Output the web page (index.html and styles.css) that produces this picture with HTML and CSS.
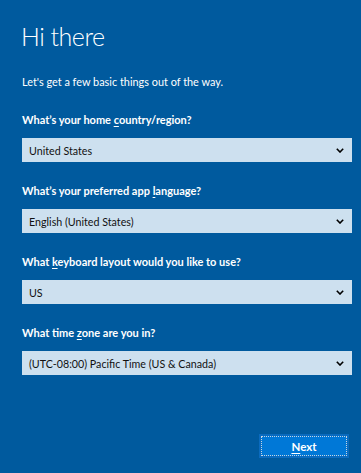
FILE: index.html
```html
<!DOCTYPE html>
<html lang="en">
<head>
<meta charset="utf-8">
<title>Hi there</title>
<link rel="stylesheet" href="styles.css">
</head>
<body>
<div class="page">
  <h1 class="title">Hi there</h1>
  <p class="intro">Let's get a few basic things out of the way.</p>

  <div class="field">
    <div class="label">What’s your home <u>c</u>ountry/region?</div>
    <div class="select"><span>United States</span><svg class="chev" viewBox="0 0 8 5" width="8" height="5"><path d="M0.8 0.8 L4 4 L7.2 0.8" fill="none" stroke="#000" stroke-width="1.6"/></svg></div>
  </div>

  <div class="field">
    <div class="label">What’s your preferred app <u>l</u>anguage?</div>
    <div class="select"><span>English (United States)</span><svg class="chev" viewBox="0 0 8 5" width="8" height="5"><path d="M0.8 0.8 L4 4 L7.2 0.8" fill="none" stroke="#000" stroke-width="1.6"/></svg></div>
  </div>

  <div class="field">
    <div class="label">What <u>k</u>eyboard layout would you like to use?</div>
    <div class="select"><span>US</span><svg class="chev" viewBox="0 0 8 5" width="8" height="5"><path d="M0.8 0.8 L4 4 L7.2 0.8" fill="none" stroke="#000" stroke-width="1.6"/></svg></div>
  </div>

  <div class="field">
    <div class="label">What time <u>z</u>one are you in?</div>
    <div class="select"><span>(UTC-08:00) Pacific Time (US &amp; Canada)</span><svg class="chev" viewBox="0 0 8 5" width="8" height="5"><path d="M0.8 0.8 L4 4 L7.2 0.8" fill="none" stroke="#000" stroke-width="1.6"/></svg></div>
  </div>

  <div class="footer">
    <button class="next"><span class="focus"><u>N</u>ext</span></button>
  </div>
</div>
</body>
</html>
```
FILE: styles.css
```css
html, body {
  margin: 0;
  padding: 0;
  background: #005a9e;
}
body {
  font-family: "Lato", "Open Sans", sans-serif;
  color: #ffffff;
}
.page {
  width: 361px;
  height: 473px;
  box-sizing: border-box;
  padding: 18px 9px 0 22px;
  display: flex;
  flex-direction: column;
}
.title {
  margin: 0 0 0 -1px;
  font-size: 25px;
  font-weight: 300;
  line-height: 37px;
  letter-spacing: -0.5px;
}
.intro {
  margin: 20px 0 0 0;
  font-size: 10.9px;
  line-height: 14px;
}
.field {
  margin-top: 24px;
}
.field + .field {
  margin-top: 22px;
}
.label {
  font-size: 11px;
  font-weight: 700;
  line-height: 14px;
}
.label u, .next u {
  text-underline-offset: 2px;
}
.select {
  margin-top: 11px;
  height: 24px;
  background: #cde0ef;
  color: #111;
  display: flex;
  align-items: center;
  justify-content: space-between;
  padding: 0 8px 0 7px;
  font-size: 10.7px;
}
.chev {
  display: block;
}
.footer {
  margin-top: auto;
  margin-bottom: 15px;
  display: flex;
  justify-content: flex-end;
  padding-right: 3px;
}
.next {
  width: 90px;
  height: 24px;
  box-sizing: border-box;
  border: 2px solid #0a6bbf;
  background: #0078d7;
  padding: 0;
  color: #fff;
  font-family: inherit;
  font-size: 11.5px;
  font-weight: 700;
  display: flex;
}
.focus {
  flex: 1;
  border: 1px dotted #c8d4e0;
  display: flex;
  align-items: center;
  justify-content: center;
}
```
